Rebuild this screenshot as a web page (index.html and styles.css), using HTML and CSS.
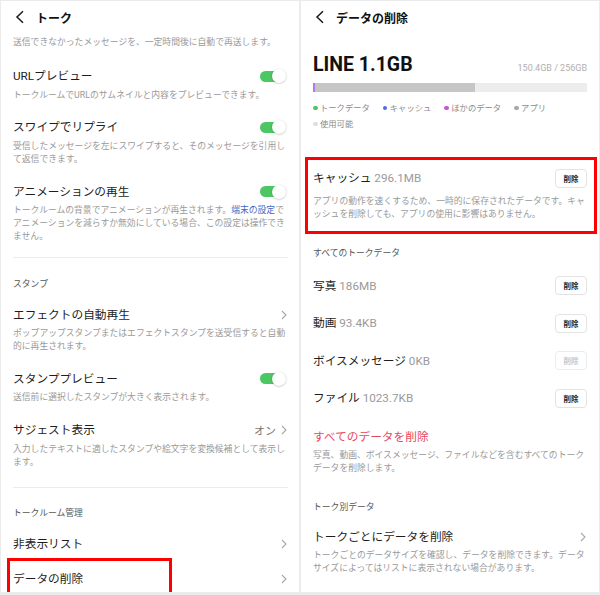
FILE: index.html
```html
<!DOCTYPE html>
<html lang="ja">
<head>
<meta charset="utf-8">
<title>トーク / データの削除</title>
<link rel="stylesheet" href="styles.css">
</head>
<body>
<div class="screens">
  <section class="panel panel-left">
    <header class="topbar">
      <svg class="back" viewBox="0 0 10 14"><path d="M8 1.2 L2 7 L8 12.8"/></svg>
      <h1>トーク</h1>
    </header>
    <p class="desc note">送信できなかったメッセージを、一定時間後に自動で再送します。</p>

    <div class="item item-first">
      <div class="row"><span class="title">URLプレビュー</span><span class="toggle"></span></div>
      <p class="desc">トークルームでURLのサムネイルと内容をプレビューできます。</p>
    </div>
    <div class="item">
      <div class="row"><span class="title">スワイプでリプライ</span><span class="toggle"></span></div>
      <p class="desc">受信したメッセージを左にスワイプすると、そのメッセージを引用し<br>て返信できます。</p>
    </div>
    <div class="item">
      <div class="row"><span class="title">アニメーションの再生</span><span class="toggle"></span></div>
      <p class="desc">トークルームの背景でアニメーションが再生されます。<span class="link">端末の設定</span>で<br>アニメーションを減らすか無効にしている場合、この設定は操作でき<br>ません。</p>
    </div>

    <hr class="divider">
    <p class="section">スタンプ</p>

    <div class="item item-first">
      <div class="row"><span class="title">エフェクトの自動再生</span><svg class="chev" viewBox="0 0 6 10"><path d="M1 1 L5 5 L1 9"/></svg></div>
      <p class="desc">ポップアップスタンプまたはエフェクトスタンプを送受信すると自動<br>的に再生されます。</p>
    </div>
    <div class="item">
      <div class="row"><span class="title">スタンププレビュー</span><span class="toggle"></span></div>
      <p class="desc">送信前に選択したスタンプが大きく表示されます。</p>
    </div>
    <div class="item">
      <div class="row"><span class="title">サジェスト表示</span><span class="value">オン<svg class="chev" viewBox="0 0 6 10"><path d="M1 1 L5 5 L1 9"/></svg></span></div>
      <p class="desc">入力したテキストに適したスタンプや絵文字を変換候補として表示し<br>ます。</p>
    </div>

    <hr class="divider divider-2">
    <p class="section">トークルーム管理</p>

    <div class="item item-first">
      <div class="row"><span class="title">非表示リスト</span><svg class="chev" viewBox="0 0 6 10"><path d="M1 1 L5 5 L1 9"/></svg></div>
    </div>
    <div class="item item-delete">
      <div class="row"><span class="title">データの削除</span><svg class="chev" viewBox="0 0 6 10"><path d="M1 1 L5 5 L1 9"/></svg></div>
    </div>
  </section>

  <section class="panel panel-right">
    <header class="topbar">
      <svg class="back" viewBox="0 0 10 14"><path d="M8 1.2 L2 7 L8 12.8"/></svg>
      <h1>データの削除</h1>
    </header>

    <div class="usage-head">
      <span class="usage-total">LINE 1.1GB</span>
      <span class="usage-cap">150.4GB / 256GB</span>
    </div>
    <div class="bar"><span class="bar-other"></span><span class="bar-app"></span></div>
    <ul class="legend">
      <li class="lg-talk">トークデータ</li>
      <li class="lg-cache">キャッシュ</li>
      <li class="lg-other">ほかのデータ</li>
      <li class="lg-app">アプリ</li>
      <li class="lg-free">使用可能</li>
    </ul>

    <div class="cache">
      <div class="data-row"><span class="title">キャッシュ <span class="size">296.1MB</span></span><span class="btn">削除</span></div>
      <p class="desc">アプリの動作を速くするため、一時的に保存されたデータです。キャ<br>ッシュを削除しても、アプリの使用に影響はありません。</p>
    </div>

    <p class="section section-talk">すべてのトークデータ</p>
    <div class="data-row data-first"><span class="title">写真 <span class="size">186MB</span></span><span class="btn">削除</span></div>
    <div class="data-row"><span class="title">動画 <span class="size">93.4KB</span></span><span class="btn">削除</span></div>
    <div class="data-row"><span class="title">ボイスメッセージ <span class="size">0KB</span></span><span class="btn btn-disabled">削除</span></div>
    <div class="data-row"><span class="title">ファイル <span class="size">1023.7KB</span></span><span class="btn">削除</span></div>

    <p class="title danger">すべてのデータを削除</p>
    <p class="desc">写真、動画、ボイスメッセージ、ファイルなどを含むすべてのトーク<br>データを削除します。</p>

    <p class="section section-per">トーク別データ</p>
    <div class="item item-per">
      <div class="row"><span class="title">トークごとにデータを削除</span><svg class="chev" viewBox="0 0 6 10"><path d="M1 1 L5 5 L1 9"/></svg></div>
      <p class="desc">トークごとのデータサイズを確認し、データを削除できます。データ<br>サイズによってはリストに表示されない場合があります。</p>
    </div>
  </section>
</div>
</body>
</html>
```

FILE: styles.css
```css
* { box-sizing: border-box; margin: 0; padding: 0; }
html, body { background: #ebebeb; }
body {
  width: 600px;
  height: 595px;
  overflow: hidden;
  font-family: Roboto, "Noto Sans CJK JP", sans-serif;
  color: #1d1d1d;
}
.screens {
  display: flex;
  gap: 2px;
  padding: 1px 1px 0 1px;
}
.panel {
  position: relative;
  width: 298px;
  height: 591px;
  background: #fff;
  overflow: hidden;
}
.panel-left { padding: 0 11px 0 12px; }
.panel-right { padding: 0 12px; }

.topbar {
  display: flex;
  align-items: center;
  height: 32px;
}
.back {
  width: 10px;
  height: 14px;
  margin-left: 2px;
  margin-right: 11px;
  fill: none;
  stroke: #1a1a1a;
  stroke-width: 1.5;
}
.topbar h1 {
  font-size: 12px;
  font-weight: 700;
  color: #111;
}

.desc {
  font-size: 8.8px;
  line-height: 13px;
  color: #9a9a9a;
  margin-top: 4.5px;
  white-space: nowrap;
}
.note { margin-top: 2.5px; }
.link { color: #4669c2; }

.title {
  font-size: 11.7px;
  line-height: 16px;
  color: #1d1d1d;
  white-space: nowrap;
}
.row {
  display: flex;
  align-items: center;
  justify-content: space-between;
  height: 16px;
}
.item { margin-top: 17.8px; position: relative; }
.item-first { margin-top: 16px; }
.note + .item-first { margin-top: 19.5px; }

.toggle {
  position: relative;
  width: 26px;
  height: 14px;
  margin-right: 2px;
}
.toggle::before {
  content: "";
  position: absolute;
  left: 0;
  top: 1.5px;
  width: 22px;
  height: 11px;
  border-radius: 6px;
  background: #4cc764;
}
.toggle::after {
  content: "";
  position: absolute;
  right: 0;
  top: 0;
  width: 14px;
  height: 14px;
  border-radius: 50%;
  background: #fff;
  box-shadow: 0 0.5px 2px rgba(0, 0, 0, 0.28);
}

.chev {
  width: 6px;
  height: 10px;
  margin-right: 1px;
  fill: none;
  stroke: #a8a8a8;
  stroke-width: 1.1;
}
.value {
  display: flex;
  align-items: center;
  gap: 5px;
  font-size: 11px;
  color: #777;
}

.divider {
  border: 0;
  border-top: 1px solid #ececec;
  margin-top: 13.5px;
}
.divider-2 { margin-top: 18px; }
.section {
  font-size: 8.8px;
  line-height: 13px;
  color: #555;
  margin-top: 20px;
}
.divider-2 + .section { margin-top: 19.5px; }

.item-delete { margin-top: 19px; }
.item-delete::after {
  content: "";
  position: absolute;
  left: -6px;
  top: -13px;
  width: 159px;
  height: 36px;
  border: 3px solid #ff0000;
}

/* right panel */
.usage-head {
  display: flex;
  justify-content: space-between;
  align-items: baseline;
  margin-top: 20px;
}
.usage-total {
  font-size: 19.5px;
  line-height: 24px;
  font-weight: 700;
  color: #111;
}
.usage-cap {
  font-size: 9px;
  color: #b0b0b0;
}
.bar {
  display: flex;
  height: 9px;
  margin-top: 6px;
  background: #ededed;
}
.bar-other { width: 1.5px; background: #b07ce6; }
.bar-app { width: 160px; background: #c6c6c6; }

.legend {
  list-style: none;
  display: flex;
  flex-wrap: wrap;
  column-gap: 13px;
  margin-top: 8px;
  font-size: 8.3px;
  line-height: 16px;
  color: #8c8c8c;
}
.legend li {
  display: flex;
  align-items: center;
  gap: 2.5px;
}
.legend li::before {
  content: "";
  width: 4.5px;
  height: 4.5px;
  border-radius: 50%;
  background: #4cc764;
}
.legend .lg-cache::before { background: #4c6fe0; }
.legend .lg-other::before { background: #c556d6; }
.legend .lg-app::before { background: #a8a8a8; }
.legend .lg-free::before { background: #dedede; }

.cache {
  position: relative;
  margin-top: 36.5px;
}
.cache::after {
  content: "";
  position: absolute;
  left: -8px;
  top: -11.5px;
  width: 286px;
  height: 71px;
  border: 3px solid #ff0000;
}
.cache .desc { margin-top: 7.5px; }

.data-row {
  display: flex;
  align-items: center;
  justify-content: space-between;
  height: 19px;
  margin-top: 18.5px;
}
.cache .data-row { margin-top: 0; }
.data-first { margin-top: 16.5px; }
.size { color: #9a9a9a; }
.btn {
  display: flex;
  align-items: center;
  justify-content: center;
  width: 32px;
  height: 19px;
  border: 1px solid #e3e3e3;
  border-radius: 4px;
  font-size: 7.5px;
  font-weight: 700;
  color: #222;
}
.btn-disabled { color: #c8c8c8; border-color: #ececec; }

.section-talk { margin-top: 25.5px; }
.danger {
  display: block;
  color: #e8485c;
  margin-top: 21px;
}
.danger + .desc { margin-top: 4px; }
.section-per { margin-top: 26.5px; }
.item-per { margin-top: 14.5px; }
```
